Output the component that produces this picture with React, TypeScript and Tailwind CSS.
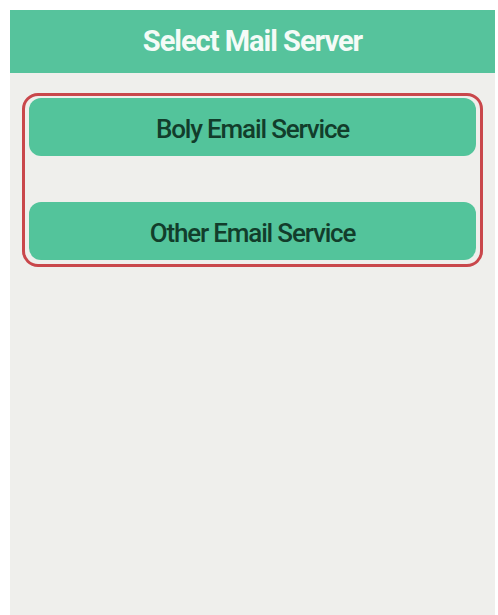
export default function App() {
  const services = ["Boly Email Service", "Other Email Service"];

  return (
    <div className="h-[615px] w-[498px] bg-white pl-[10px] pr-[3px] pt-[10px] font-['Roboto',sans-serif]">
      <div className="flex h-full flex-col bg-[#efefec]">
        <div className="flex h-[63px] items-center justify-center bg-[#56c39c]">
          <h1 className="text-[29px] font-bold tracking-[-0.035em] text-[#f4fbf7]">
            Select Mail Server
          </h1>
        </div>

        <div className="mx-[12px] mt-[20px] flex flex-col gap-[46px] rounded-[16px] border-[3px] border-[#c9474b] px-[4px] pt-[2px] pb-[4px]">
          {services.map((name) => (
            <button
              key={name}
              className="flex h-[58px] items-center justify-center rounded-[12px] bg-[#53c49b] pt-[5px] text-[26px] font-medium tracking-[-0.045em] text-[#123d2b]"
            >
              {name}
            </button>
          ))}
        </div>
      </div>
    </div>
  );
}
